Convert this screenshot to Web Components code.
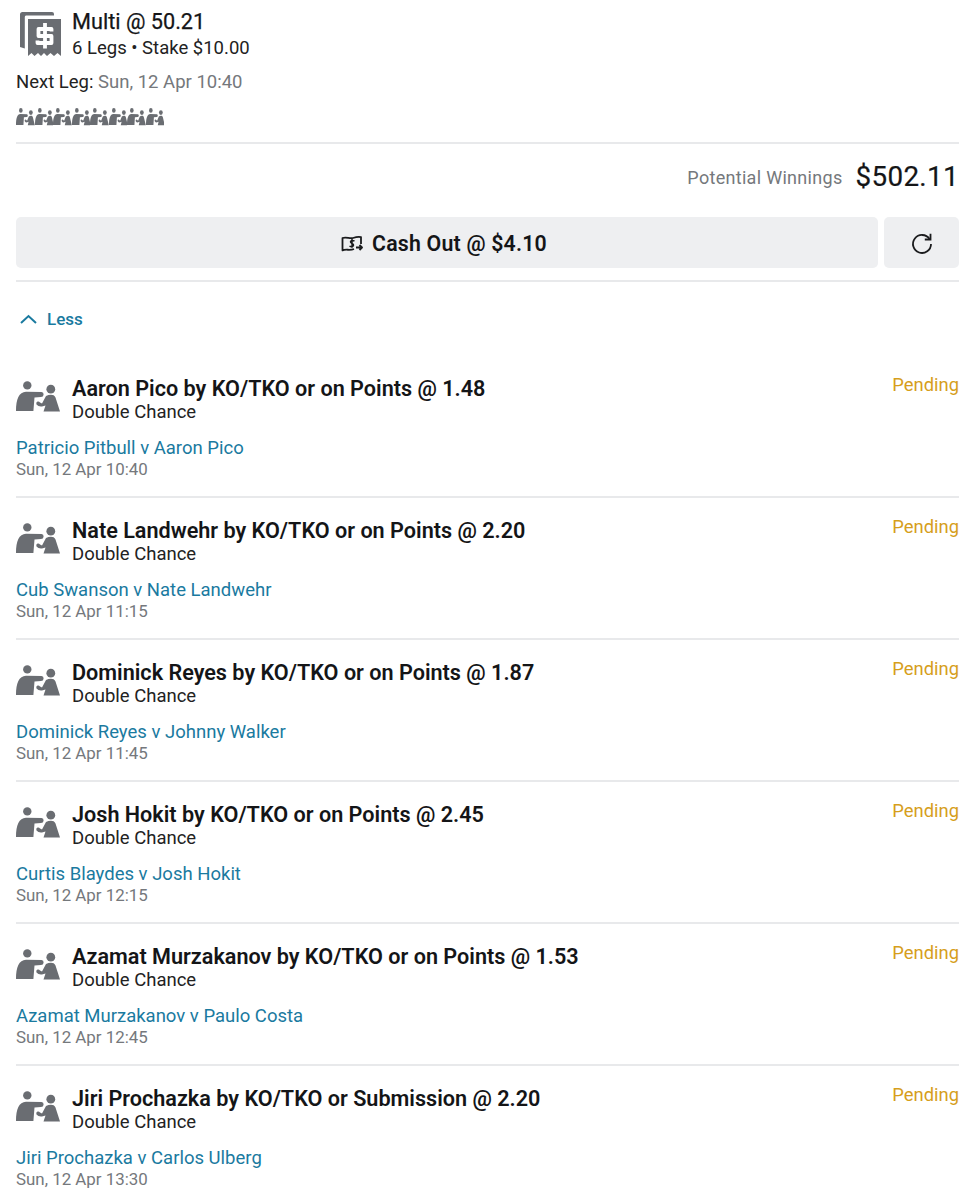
<!DOCTYPE html>
<html><head><meta charset="utf-8">
<style>
html,body{margin:0;background:#fff}
body{font-family:Roboto,"Liberation Sans",sans-serif;color:#111;width:972px;height:1200px;overflow:hidden}
</style></head><body>
<bet-card>
<bet-header></bet-header>
<bet-actions></bet-actions>
<less-toggle></less-toggle>
<bet-leg title="Aaron Pico by KO/TKO or on Points @ 1.48" event="Patricio Pitbull v Aaron Pico" time="Sun, 12 Apr 10:40"></bet-leg>
<bet-leg title="Nate Landwehr by KO/TKO or on Points @ 2.20" event="Cub Swanson v Nate Landwehr" time="Sun, 12 Apr 11:15"></bet-leg>
<bet-leg title="Dominick Reyes by KO/TKO or on Points @ 1.87" event="Dominick Reyes v Johnny Walker" time="Sun, 12 Apr 11:45"></bet-leg>
<bet-leg title="Josh Hokit by KO/TKO or on Points @ 2.45" event="Curtis Blaydes v Josh Hokit" time="Sun, 12 Apr 12:15"></bet-leg>
<bet-leg title="Azamat Murzakanov by KO/TKO or on Points @ 1.53" event="Azamat Murzakanov v Paulo Costa" time="Sun, 12 Apr 12:45"></bet-leg>
<bet-leg title="Jiri Prochazka by KO/TKO or Submission @ 2.20" event="Jiri Prochazka v Carlos Ulberg" time="Sun, 12 Apr 13:30" last></bet-leg>
</bet-card>
<script>
const FIGHT=`<circle cx="11.3" cy="4.4" r="4.2"/><circle cx="34.8" cy="8.2" r="4.4"/><path d="M0 30C0 18 3 11 10 10.800L25.500 11Q27.800 11.400 27.600 13.700Q27.300 16 25 16L18.500 16.400L17.400 30Z"/><path d="M30 15C33.500 13.500 38 13 39.500 16.500L44 30.500H27.500L29.500 24.500L26 25.500Q22.500 26 20.500 23.500Q19.500 21.500 21.500 20.500Q23 20 24 21.500L26 22.500Z"/>`;
const fightSvg=(w,h,par)=>`<svg width="${w}" height="${h}" viewBox="0 0 44 32" ${par?'preserveAspectRatio="none"':''} fill="#6a6d72" aria-hidden="true">${FIGHT}</svg>`;
function def(name,css,html){
  customElements.define(name,class extends HTMLElement{
    constructor(){super();this.attachShadow({mode:"open"})}
    connectedCallback(){
      this.shadowRoot.innerHTML=`<style>${css}</style>`+(typeof html==="function"?html(this):html);
    }
  });
}
def("bet-card",`:host{display:block;padding:0 13px 0 16px}`,`<slot></slot>`);
def("bet-header",`
:host{display:block;height:144px;box-sizing:border-box;border-bottom:2px solid #e8e9eb;padding-top:8px}
.top{display:flex;gap:10px;height:53px}
.ic{width:46px;flex:none;padding:2px 0 0 0}
.t{font-size:21.700px;line-height:27px;color:#141517;font-weight:400;-webkit-text-stroke:.25px #141517}
.s{font-size:18.500px;line-height:26px;color:#222}
.n{font-size:18.500px;line-height:26px;margin-top:8px;color:#222}
.n span{color:#75787c}
.m{display:flex;margin-top:13px;height:18px}
.m svg{flex:none;margin-right:-.300px}
`,()=>`<div class="top"><div class="ic"><svg width="46" height="48" viewBox="0 0 46 48" fill="#6a6d72" aria-hidden="true">
<path d="M6.500 2H36Q38 2 38 4V5.500H10Q8.800 5.500 8.800 7V38.500L4 37V4.500Q4 2 6.500 2Z"/>
<path d="M12 9H45V46L41.500 43 38 46 34.500 43 31 46 28 43 25 46 22 43 18.500 46 15.500 43 12 46Z"/>
<path d="M35.500 21.500V19H22.500V26H35.500V33H21.500V30.500M29 13V38.500" fill="none" stroke="#fff" stroke-width="3.800" stroke-linejoin="round"/>
</svg></div><div><div class="t">Multi @ 50.21</div><div class="s">6 Legs • Stake $10.00</div></div></div>
<div class="n">Next Leg: <span>Sun, 12 Apr 10:40</span></div>
<div class="m">${Array(8).fill(fightSvg(18.800,18,true)).join("")}</div>`);
def("bet-actions",`
:host{display:block;height:138px;box-sizing:border-box;border-bottom:2px solid #e8e9eb}
.w{display:flex;justify-content:flex-end;align-items:center;gap:13px;height:73px;box-sizing:border-box;padding-bottom:8px}
.l{font-size:18px;color:#75787c;letter-spacing:.3px;padding-top:2px}
.v{font-size:27.800px;color:#141517;letter-spacing:.35px;-webkit-text-stroke:.2px #141517}
.b{display:flex;gap:6px;height:51px}
.c,.r{background:#eeeff1;border-radius:5px;display:flex;align-items:center;justify-content:center}
.c{flex:1;gap:9px;font-size:21.300px;font-weight:600;color:#141517;letter-spacing:.2px;box-sizing:border-box;padding:1px 6px 0 0}
.r{width:75px}
`,()=>`<div class="w"><span class="l">Potential Winnings</span><span class="v">$502.11</span></div>
<div class="b"><div class="c"><svg width="22" height="17" viewBox="0 0 22 17" fill="none" stroke="#1a1b1d" stroke-width="1.800" stroke-linejoin="round" aria-hidden="true"><path d="M13 14C9 15.800 5 13.800 1.500 15.300V3C5.500 1.500 8.500 4 12 3C15 2 17.500 1.300 20 2.200V9"/><path d="M13.500 6.200Q12 5.200 10.500 5.700Q8.500 6.700 10.500 8.200Q13.500 9.300 12 11.200Q10.500 12.200 8.500 11.200M11 4V12.800" stroke-width="1.500"/><path d="M15 12.500H21M18.500 10L21 12.500L18.500 15"/></svg><span>Cash Out @ $4.10</span></div>
<div class="r"><svg width="24" height="24" viewBox="0 0 24 24" fill="none" stroke="#1a1b1d" stroke-width="1.800" aria-hidden="true"><path d="M19.500 8A9 9 0 1 0 21 13"/><path d="M20.500 2.800V8.500H14.800"/></svg></div></div>`);
def("less-toggle",`
:host{display:flex;align-items:center;gap:10px;height:74px;box-sizing:border-box;padding:0 0 0 4px;color:#1a7a9f;font-size:17px;font-weight:500}
svg{flex:none}
`,()=>`<svg width="17" height="11" viewBox="0 0 17 11" fill="none" stroke="#1a7a9f" stroke-width="2"><path d="M1 9L8.500 2L16 9"/></svg><span>Less</span>`);
def("bet-leg",`
:host{display:block;height:142px;box-sizing:border-box;border-bottom:2px solid #e8e9eb;padding-top:18px}
:host([last]){border-bottom:0}
.h{display:flex;height:54px}
.ic{width:56px;flex:none;padding-top:7px}
.x{flex:1;min-width:0;padding-top:2px}
.t{font-size:21.620px;line-height:26px;font-weight:600;color:#141517}
.d{font-size:18.500px;line-height:21px;color:#222}
.p{font-size:18.400px;line-height:24px;color:#d69e1c;margin-top:-1px}
.e{font-size:18.500px;line-height:22px;color:#1a7a9f;margin-top:9px}
.w{font-size:16.900px;line-height:20px;color:#75787c}
`,h=>`<div class="h"><div class="ic">${fightSvg(44,32)}</div><div class="x"><div class="t">${h.getAttribute("title")}</div><div class="d">Double Chance</div></div><div class="p">Pending</div></div>
<div class="e">${h.getAttribute("event")}</div><div class="w">${h.getAttribute("time")}</div>`);
</script>
</body></html>
